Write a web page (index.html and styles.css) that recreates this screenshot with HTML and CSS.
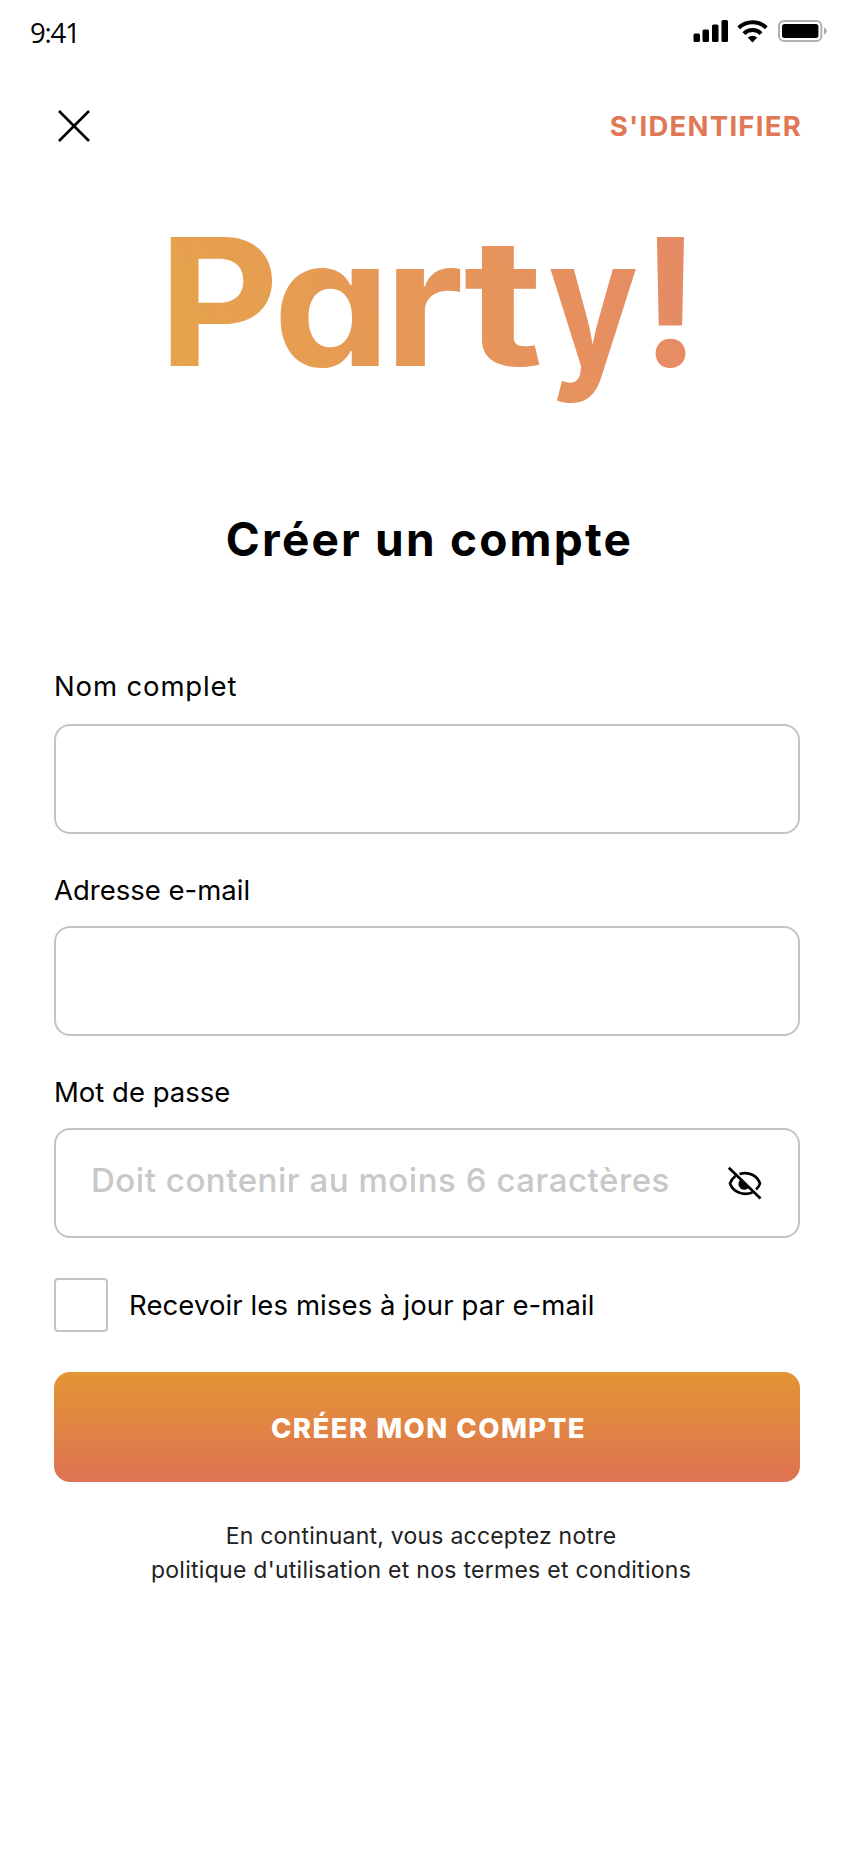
FILE: index.html
```html
<!DOCTYPE html>
<html lang="fr">
<head>
<meta charset="utf-8">
<title>Party! – Créer un compte</title>
<link rel="stylesheet" href="styles.css">
</head>
<body>
<main class="screen">
  <div class="status-bar">
    <span class="time">9:41</span>
    <svg class="status-icons" width="136" height="26" viewBox="692 18 136 26" aria-hidden="true">
      <rect x="693.5" y="33.5" width="6.5" height="8.5" rx="1.5"/>
      <rect x="702.5" y="29.5" width="6.5" height="12.5" rx="1.5"/>
      <rect x="712" y="24.5" width="6.5" height="17.5" rx="1.5"/>
      <rect x="721.5" y="20" width="6.5" height="22" rx="1.5"/>
      <g fill="none" stroke="#000" stroke-width="4">
        <path d="M738.7 27.8a20 20 0 0 1 27.6 0"/>
        <path d="M743.9 33.6a12.3 12.3 0 0 1 17.2 0"/>
      </g>
      <path d="M747.8 37.6a7 7 0 0 1 9.4 0L752.5 42.6z"/>
      <rect x="779" y="20.9" width="42.4" height="20.2" rx="5" fill="none" stroke="#b0b0b0" stroke-width="2"/>
      <rect x="782" y="24" width="36.4" height="14" rx="2.5"/>
      <path d="M824 27.5c3.6 1.2 3.6 5.8 0 7z" fill="#aaa"/>
    </svg>
  </div>

  <header class="top-bar">
    <button class="close" type="button" aria-label="Fermer">
      <svg width="34" height="34" viewBox="0 0 34 34"><path d="M2 2l30 30M32 2L2 32" stroke="#000" stroke-width="2.6"/></svg>
    </button>
    <a class="sign-in">S'IDENTIFIER</a>
  </header>

  <svg class="logo" width="856" height="270" viewBox="0 170 856 270">
    <defs>
      <linearGradient id="brand" gradientUnits="userSpaceOnUse" x1="190" y1="400" x2="640" y2="230">
        <stop offset="0" stop-color="#e6a34b"/>
        <stop offset="1" stop-color="#e68c64"/>
      </linearGradient>
    </defs>
    <text class="logo-text" y="366" fill="url(#brand)"><tspan x="158.4" textLength="120.6" lengthAdjust="spacingAndGlyphs">P</tspan><tspan x="273.3" textLength="117" lengthAdjust="spacingAndGlyphs">a</tspan><tspan x="383.9" textLength="79.6" lengthAdjust="spacingAndGlyphs">r</tspan><tspan x="463.5" textLength="79.6" lengthAdjust="spacingAndGlyphs">t</tspan><tspan x="548.3" textLength="89.9" lengthAdjust="spacingAndGlyphs">y</tspan><tspan x="641.4" textLength="58" lengthAdjust="spacingAndGlyphs">!</tspan></text>
  </svg>

  <h1 class="title">Créer un compte</h1>

  <form class="form">
    <div class="field">
      <label class="label label-name" for="name">Nom complet</label>
      <input class="input" id="name" type="text">
    </div>
    <div class="field">
      <label class="label" for="email">Adresse e-mail</label>
      <input class="input" id="email" type="email">
    </div>
    <div class="field">
      <label class="label" for="password">Mot de passe</label>
      <div class="input input-password">
        <span class="placeholder">Doit contenir au moins 6 caractères</span>
        <svg class="eye" width="36" height="36" viewBox="727 1166 36 36" fill="none" stroke="#000" stroke-width="2.7">
          <path d="M728.8 1168.8L760.5 1199.5"/>
          <path d="M739.5 1175C749 1172 757.5 1177 760 1184.5Q759 1188 756 1190.5"/>
          <path d="M735.5 1177Q731.5 1180 730 1184.5C733 1193 743 1197 752.5 1193.5"/>
          <path d="M740.6 1181.5A5 5 0 0 0 748 1188.5z" fill="#000" stroke-width="1.5"/>
        </svg>
      </div>
    </div>
    <label class="updates">
      <span class="checkbox"></span>
      <span class="updates-text">Recevoir les mises à jour par e-mail</span>
    </label>
    <button class="submit" type="button">CRÉER MON COMPTE</button>
  </form>

  <p class="terms"><span class="terms-intro">En continuant, vous acceptez notre</span><br><span class="terms-links">politique d'utilisation et nos termes et conditions</span></p>
</main>
</body>
</html>
```
FILE: styles.css
```css
* {
  box-sizing: border-box;
}

body {
  margin: 0;
  background: #fff;
  color: #000;
  font-family: Inter, "Liberation Sans", sans-serif;
}

.screen {
  width: 856px;
  height: 1852px;
  overflow: hidden;
}

.status-bar {
  display: flex;
  justify-content: space-between;
  align-items: flex-start;
  height: 92px;
  padding: 18px 28px 0 30px;
}

.time {
  font: 400 27.5px/30px "Open Sans", sans-serif;
  letter-spacing: -1.2px;
}

.top-bar {
  display: flex;
  justify-content: space-between;
  align-items: center;
  height: 68px;
  padding: 0 54px 0 57px;
}

.close {
  display: flex;
  padding: 0;
  border: 0;
  background: none;
}

.sign-in {
  color: #e07855;
  font-size: 27.5px;
  font-weight: 700;
  line-height: 34px;
  letter-spacing: 1.25px;
}

.logo {
  display: block;
  margin-top: 10px;
  overflow: visible;
}

.logo-text {
  font-size: 177px;
  font-weight: 700;
  font-feature-settings: "cv11";
}

.title {
  margin: 71px 0 0;
  padding-left: 3px;
  text-align: center;
  font-size: 46px;
  font-weight: 700;
  line-height: 56px;
  letter-spacing: 2.2px;
}

.form {
  display: flex;
  flex-direction: column;
  padding: 102px 56px 0 54px;
}

.field {
  display: flex;
  flex-direction: column;
  gap: 19px;
  margin-bottom: 39px;
}

.label {
  font-size: 27.5px;
  line-height: 34px;
}

.label-name {
  margin-bottom: 2px;
  letter-spacing: 0.86px;
}

.input {
  width: 100%;
  height: 110px;
  padding: 0 35px;
  border: 2px solid #c4c4c4;
  border-radius: 16px;
  background: #fff;
}

.input-password {
  display: flex;
  align-items: center;
  justify-content: space-between;
}

.placeholder {
  padding-bottom: 7px;
  color: #c8c8c8;
  font-size: 33px;
  font-weight: 500;
  letter-spacing: 0.54px;
}

.updates {
  display: flex;
  align-items: center;
  gap: 21px;
  margin: 1px 0 40px;
}

.checkbox {
  width: 54px;
  height: 54px;
  border: 2px solid #c4c4c4;
  border-radius: 4px;
}

.updates-text {
  font-size: 27.5px;
  line-height: 34px;
  letter-spacing: 0.1px;
}

.submit {
  height: 110px;
  padding: 2px 0 0 3px;
  border: 0;
  border-radius: 16px;
  background: linear-gradient(#e39534, #de7353);
  color: #fff;
  font: 800 27.5px/34px Inter, sans-serif;
  letter-spacing: 1.47px;
}

.terms {
  margin: 37px 0 0;
  padding-right: 14px;
  text-align: center;
  color: #222;
  font-size: 23px;
  line-height: 34px;
}

.terms-intro {
  letter-spacing: 0.22px;
}

.terms-links {
  letter-spacing: 0.28px;
}
```
